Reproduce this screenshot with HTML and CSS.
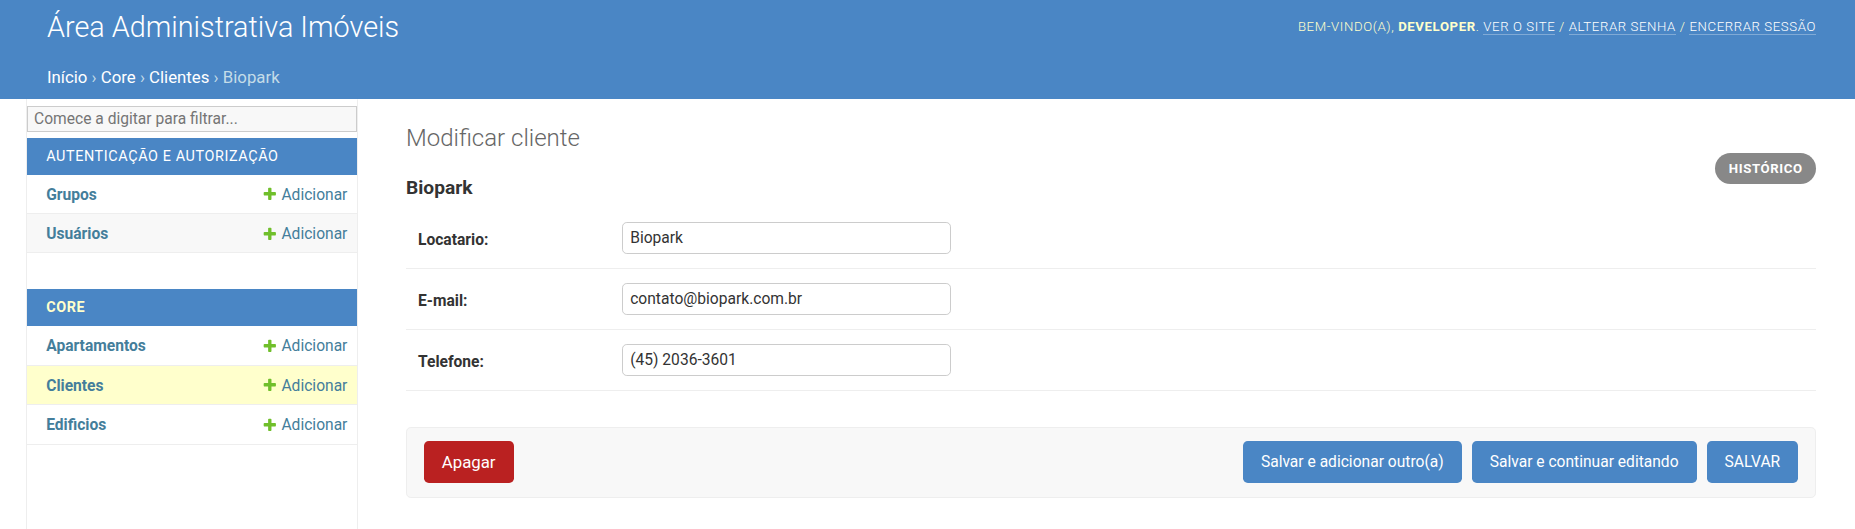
FILE: index.html
```html
<!DOCTYPE html>
<html lang="pt-br">
<head>
<meta charset="utf-8">
<title>Modificar cliente | Área Administrativa Imóveis</title>
<link rel="stylesheet" href="styles.css">
</head>
<body>
<header class="header">
  <h1 class="site-name">Área Administrativa Imóveis</h1>
  <div class="user-tools">BEM-VINDO(A), <strong>DEVELOPER</strong>. <a href="#">VER O SITE</a> / <a href="#">ALTERAR SENHA</a> / <a href="#">ENCERRAR SESSÃO</a></div>
</header>
<nav class="breadcrumbs"><a href="#">Início</a> › <a href="#">Core</a> › <a href="#">Clientes</a> › Biopark</nav>
<div class="main">
  <div class="toggle-nav"></div>
  <nav class="sidebar">
    <input class="nav-filter" type="search" placeholder="Comece a digitar para filtrar...">
    <div class="module">
      <div class="caption">AUTENTICAÇÃO E AUTORIZAÇÃO</div>
      <div class="nav-row"><a class="model" href="#">Grupos</a><a class="addlink" href="#"><svg class="plus" viewBox="0 0 1792 1792"><path fill="#70bf2b" d="M1600 796v192q0 40-28 68t-68 28h-416v416q0 40-28 68t-68 28h-192q-40 0-68-28t-28-68v-416h-416q-40 0-68-28t-28-68v-192q0-40 28-68t68-28h416v-416q0-40 28-68t68-28h192q40 0 68 28t28 68v416h416q40 0 68 28t28 68z"/></svg>Adicionar</a></div>
      <div class="nav-row even"><a class="model" href="#">Usuários</a><a class="addlink" href="#"><svg class="plus" viewBox="0 0 1792 1792"><path fill="#70bf2b" d="M1600 796v192q0 40-28 68t-68 28h-416v416q0 40-28 68t-68 28h-192q-40 0-68-28t-28-68v-416h-416q-40 0-68-28t-28-68v-192q0-40 28-68t68-28h416v-416q0-40 28-68t68-28h192q40 0 68 28t28 68v416h416q40 0 68 28t28 68z"/></svg>Adicionar</a></div>
    </div>
    <div class="module">
      <div class="caption current-app">CORE</div>
      <div class="nav-row"><a class="model" href="#">Apartamentos</a><a class="addlink" href="#"><svg class="plus" viewBox="0 0 1792 1792"><path fill="#70bf2b" d="M1600 796v192q0 40-28 68t-68 28h-416v416q0 40-28 68t-68 28h-192q-40 0-68-28t-28-68v-416h-416q-40 0-68-28t-28-68v-192q0-40 28-68t68-28h416v-416q0-40 28-68t68-28h192q40 0 68 28t28 68v416h416q40 0 68 28t28 68z"/></svg>Adicionar</a></div>
      <div class="nav-row current"><a class="model" href="#">Clientes</a><a class="addlink" href="#"><svg class="plus" viewBox="0 0 1792 1792"><path fill="#70bf2b" d="M1600 796v192q0 40-28 68t-68 28h-416v416q0 40-28 68t-68 28h-192q-40 0-68-28t-28-68v-416h-416q-40 0-68-28t-28-68v-192q0-40 28-68t68-28h416v-416q0-40 28-68t68-28h192q40 0 68 28t28 68v416h416q40 0 68 28t28 68z"/></svg>Adicionar</a></div>
      <div class="nav-row"><a class="model" href="#">Edificios</a><a class="addlink" href="#"><svg class="plus" viewBox="0 0 1792 1792"><path fill="#70bf2b" d="M1600 796v192q0 40-28 68t-68 28h-416v416q0 40-28 68t-68 28h-192q-40 0-68-28t-28-68v-416h-416q-40 0-68-28t-28-68v-192q0-40 28-68t68-28h416v-416q0-40 28-68t68-28h192q40 0 68 28t28 68v416h416q40 0 68 28t28 68z"/></svg>Adicionar</a></div>
    </div>
  </nav>
  <main class="content">
    <div class="content-head">
      <div class="titles">
        <h1 class="page-title">Modificar cliente</h1>
        <h2 class="subtitle">Biopark</h2>
      </div>
      <a class="history" href="#">HISTÓRICO</a>
    </div>
    <form class="change-form">
      <div class="form-row">
        <label class="field-label" for="id_locatario">Locatario:</label>
        <input class="text-input" id="id_locatario" type="text" value="Biopark">
      </div>
      <div class="form-row">
        <label class="field-label" for="id_email">E-mail:</label>
        <input class="text-input" id="id_email" type="text" value="contato@biopark.com.br">
      </div>
      <div class="form-row">
        <label class="field-label" for="id_telefone">Telefone:</label>
        <input class="text-input" id="id_telefone" type="text" value="(45) 2036-3601">
      </div>
      <div class="submit-row">
        <a class="deletelink" href="#">Apagar</a>
        <button class="btn" type="button">Salvar e adicionar outro(a)</button>
        <button class="btn" type="button">Salvar e continuar editando</button>
        <button class="btn" type="button">SALVAR</button>
      </div>
    </form>
  </main>
</div>
</body>
</html>
```

FILE: styles.css
```css
html, body {
  margin: 0;
  padding: 0;
}
body {
  font-family: Roboto, "Liberation Sans", Arial, sans-serif;
  font-size: 16.8px;
  color: #333;
  background: #fff;
}
a {
  text-decoration: none;
}

/* header */
.header {
  display: flex;
  justify-content: space-between;
  align-items: center;
  box-sizing: border-box;
  height: 56px;
  padding: 11px 39px 13px 47px;
  background: #4a86c5;
  color: #ffc;
}
.site-name {
  margin: 0;
  font-size: 28.8px;
  font-weight: 300;
  line-height: 32px;
  color: #fff;
}
.user-tools {
  margin-bottom: 2px;
  font-size: 13.2px;
  font-weight: 300;
  letter-spacing: 0.6px;
  line-height: 15px;
  color: #ffc;
}
.user-tools strong {
  font-weight: 700;
}
.user-tools a {
  color: #fff;
  border-bottom: 1px solid rgba(255, 255, 255, 0.3);
}

.breadcrumbs {
  box-sizing: border-box;
  height: 43px;
  padding: 12px 47px;
  font-size: 16.8px;
  line-height: 19px;
  background: #4a86c5;
  color: #c4dce8;
}
.breadcrumbs a {
  color: #fff;
}

/* main layout */
.main {
  display: flex;
  min-height: calc(100vh - 99px);
}
.toggle-nav {
  flex: 0 0 27px;
  box-sizing: border-box;
  border-right: 1px solid #eee;
  background: #fff;
}
.sidebar {
  flex: 0 0 331px;
  box-sizing: border-box;
  border-top: 1px solid transparent;
  border-right: 1px solid #eee;
}
.nav-filter {
  display: block;
  box-sizing: border-box;
  width: 100%;
  height: 25.6px;
  margin: 6px 0;
  padding: 0 6px;
  border: 1px solid #ccc;
  background: #f8f8f8;
  font-family: Roboto, "Liberation Sans", Arial, sans-serif;
  font-size: 15.6px;
  color: #333;
  outline: none;
}
.nav-filter::placeholder {
  color: #757575;
}
.module {
  margin-bottom: 36px;
}
.caption {
  height: 37px;
  padding-left: 19.2px;
  line-height: 37px;
  font-size: 14.4px;
  letter-spacing: 0.6px;
  color: #fff;
  background: #4a86c5;
}
.caption.current-app {
  color: #ffc;
  font-weight: 700;
}
.nav-row {
  display: flex;
  justify-content: space-between;
  align-items: baseline;
  padding: 11px 9.6px 8.2px 19.2px;
  border-bottom: 1px solid #eee;
  font-size: 15.6px;
  line-height: 19.2px;
  background: #fff;
}
.nav-row.even {
  background: #f8f8f8;
}
.nav-row.current {
  background: #ffc;
}
.model {
  font-weight: 700;
  color: #447e9b;
}
.addlink {
  color: #447e9b;
  white-space: nowrap;
}
.plus {
  width: 15.6px;
  height: 15.6px;
  margin-right: 3.6px;
  vertical-align: -2.3px;
}

/* content */
.content {
  flex: 1;
  padding: 24px 39px 24px 48px;
  min-width: 0;
}
.content-head {
  display: flex;
  justify-content: space-between;
  align-items: flex-start;
}
.page-title {
  margin: 0 0 24px;
  font-size: 24px;
  font-weight: 300;
  line-height: 30px;
  color: #666;
}
.subtitle {
  margin: 0 0 8px;
  font-size: 19.2px;
  font-weight: 700;
  line-height: 22.5px;
  color: #333;
}
.history {
  margin-top: 30px;
  height: 31px;
  padding: 0 13.4px;
  border-radius: 16px;
  background: #888;
  color: #fff;
  font-size: 13.2px;
  font-weight: 700;
  letter-spacing: 0.6px;
  line-height: 31px;
}

.change-form {
  margin: 0;
}
.form-row {
  display: flex;
  align-items: flex-start;
  padding: 12px;
  border-bottom: 1px solid #eee;
}
.field-label {
  flex: 0 0 204px;
  box-sizing: border-box;
  padding: 12px 12px 0 0;
  font-size: 15.6px;
  font-weight: 700;
  line-height: 16px;
  color: #333;
}
.text-input {
  box-sizing: border-box;
  width: 329px;
  height: 32px;
  margin: 2px 0;
  padding: 0 7.2px;
  border: 1px solid #ccc;
  border-radius: 4.8px;
  font-family: Roboto, "Liberation Sans", Arial, sans-serif;
  font-size: 15.6px;
  color: #333;
  background: #fff;
}

.submit-row {
  display: flex;
  align-items: center;
  gap: 10px;
  margin-top: 36px;
  padding: 13.5px 16.8px;
  background: #f8f8f8;
  border: 1px solid #eee;
  border-radius: 4.8px;
}
.deletelink {
  margin-right: auto;
  height: 42px;
  padding: 0 18px;
  border-radius: 4.8px;
  background: #ba2121;
  color: #fff;
  font-size: 16.8px;
  line-height: 42px;
}
.btn {
  height: 42px;
  padding: 0 18px;
  border: none;
  border-radius: 4.8px;
  background: #4a86c5;
  color: #fff;
  font-family: Roboto, "Liberation Sans", Arial, sans-serif;
  font-size: 15.6px;
  line-height: 15px;
}
```
